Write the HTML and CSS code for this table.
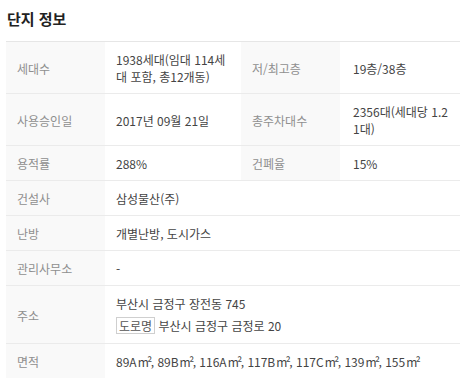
FILE: index.html
```html
<!DOCTYPE html>
<html lang="ko">
<head>
<meta charset="utf-8">
<link rel="stylesheet" href="styles.css">
</head>
<body>
<section class="complex">
  <h2 class="complex-title">단지 정보</h2>
  <table class="info">
    <colgroup>
      <col class="c-label"><col class="c-value1"><col class="c-label"><col class="c-value2">
    </colgroup>
    <tr>
      <th>세대수</th><td>1938세대(임대 114세대 포함, 총12개동)</td>
      <th>저/최고층</th><td class="v2">19층/38층</td>
    </tr>
    <tr>
      <th>사용승인일</th><td>2017년 09월 21일</td>
      <th>총주차대수</th><td class="v2">2356대(세대당 1.21대)</td>
    </tr>
    <tr>
      <th>용적률</th><td>288%</td>
      <th>건폐율</th><td class="v2">15%</td>
    </tr>
    <tr><th>건설사</th><td colspan="3">삼성물산(주)</td></tr>
    <tr><th>난방</th><td colspan="3">개별난방, 도시가스</td></tr>
    <tr><th>관리사무소</th><td colspan="3">-</td></tr>
    <tr>
      <th>주소</th>
      <td colspan="3">
        <div>부산시 금정구 장전동 745</div>
        <div class="road"><span class="badge">도로명</span> 부산시 금정구 금정로 20</div>
      </td>
    </tr>
    <tr><th>면적</th><td colspan="3">89A<span class="unit">m²</span>, 89B<span class="unit">m²</span>, 116A<span class="unit">m²</span>, 117B<span class="unit">m²</span>, 117C<span class="unit">m²</span>, 139<span class="unit">m²</span>, 155<span class="unit">m²</span></td></tr>
  </table>
</section>
</body>
</html>
```
FILE: styles.css
```css
html, body {
  margin: 0;
  background: #fff;
}
body {
  font-family: "Noto Sans CJK KR", "Noto Sans", sans-serif;
  font-size: 12px;
  color: #444;
}
.complex {
  padding: 0 5px 0 6px;
}
.complex-title {
  margin: 0;
  padding: 9px 0 12px 1px;
  font-size: 15px;
  line-height: 20px;
  font-weight: 700;
  color: #222;
}
.info {
  width: 100%;
  table-layout: fixed;
  border-collapse: collapse;
  border-top: 1px solid #e6e6e6;
}
.c-label { width: 99px; }
.c-value1 { width: 136px; }
.info tr {
  border-bottom: 1px solid #ebebeb;
}
.info th, .info td {
  padding: 9px 0 8px;
  line-height: 17px;
  vertical-align: middle;
  text-align: left;
  word-break: break-all;
}
.info th {
  background: #f9f9f9;
  font-weight: 400;
  color: #8f8f8f;
  padding-left: 11px;
}
.info td {
  padding-left: 11px;
  padding-right: 9px;
  color: #444;
}
.info td.v2 {
  padding-left: 13px;
  padding-right: 10px;
}
.unit {
  margin-left: 1px;
  letter-spacing: -1.5px;
}
.road {
  margin-top: 4px;
  line-height: 19px;
}
.badge {
  display: inline-block;
  border: 1px solid #cfcfcf;
  padding: 0 2px;
  line-height: 15px;
  color: #555;
}
```
